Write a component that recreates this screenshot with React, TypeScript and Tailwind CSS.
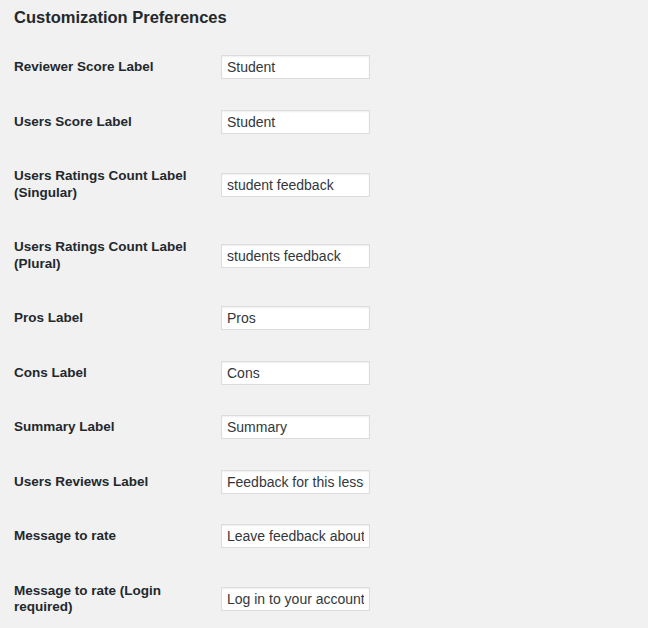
const rows: { label: string[]; value: string }[] = [
  { label: ["Reviewer Score Label"], value: "Student" },
  { label: ["Users Score Label"], value: "Student" },
  { label: ["Users Ratings Count Label", "(Singular)"], value: "student feedback" },
  { label: ["Users Ratings Count Label", "(Plural)"], value: "students feedback" },
  { label: ["Pros Label"], value: "Pros" },
  { label: ["Cons Label"], value: "Cons" },
  { label: ["Summary Label"], value: "Summary" },
  { label: ["Users Reviews Label"], value: "Feedback for this lesson" },
  { label: ["Message to rate"], value: "Leave feedback about this lesson" },
  { label: ["Message to rate (Login", "required)"], value: "Log in to your account to leave feedback" },
];

export default function App() {
  return (
    <div className="h-[628px] w-[648px] overflow-hidden bg-[#f1f1f1] pl-[14px] font-['Liberation_Sans',Arial,sans-serif] text-[#23282d]">
      <h2 className="pt-[7px] text-[16.5px] leading-[20px] font-bold">Customization Preferences</h2>
      <div className="mt-[13px] flex flex-col">
        {rows.map((row) => (
          <div key={row.value} className="flex items-center">
            <div className="w-[207px] py-[19px] text-[13.5px] leading-[16.5px] font-bold">
              {row.label.map((line) => (
                <div key={line}>{line}</div>
              ))}
            </div>
            <input
              readOnly
              value={row.value}
              className="h-[24px] w-[149px] border border-[#dddddd] bg-white px-[5px] text-[14px] text-[#32373c] shadow-[inset_0_1px_2px_rgba(0,0,0,0.07)] outline-none font-['Liberation_Sans',Arial,sans-serif]"
            />
          </div>
        ))}
      </div>
    </div>
  );
}
